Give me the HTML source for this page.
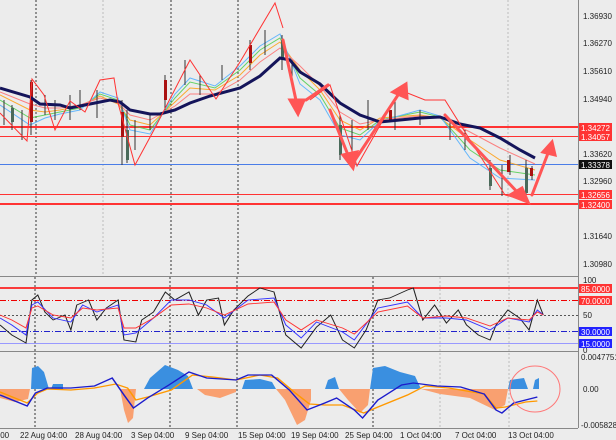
<!DOCTYPE html>
<html><head><meta charset="utf-8"><style>
html,body{margin:0;padding:0;background:#ececec;}
svg{display:block;font-family:"Liberation Sans",sans-serif;}
</style></head><body>
<svg width="616" height="440" viewBox="0 0 616 440" xmlns="http://www.w3.org/2000/svg">
<rect width="616" height="440" fill="#ececec"/>
<line x1="578.5" y1="0" x2="578.5" y2="428" stroke="#888" stroke-width="1"/>
<line x1="0" y1="276.5" x2="578" y2="276.5" stroke="#888"/>
<line x1="0" y1="351.5" x2="578" y2="351.5" stroke="#888"/>
<line x1="0" y1="428.5" x2="578" y2="428.5" stroke="#888"/>
<g stroke="#333" stroke-dasharray="2,2" stroke-width="1">
<line x1="36" y1="0" x2="36" y2="276"/><line x1="171" y1="0" x2="171" y2="276"/><line x1="238" y1="0" x2="238" y2="276"/>
<line x1="35" y1="277" x2="35" y2="428"/><line x1="170" y1="277" x2="170" y2="428"/><line x1="237" y1="277" x2="237" y2="428"/>
<line x1="373" y1="277" x2="373" y2="428"/>
</g>
<g stroke="#bbb" stroke-dasharray="2,2"><line x1="103" y1="0" x2="103" y2="276"/><line x1="508" y1="0" x2="508" y2="276"/><line x1="440" y1="277" x2="440" y2="428"/><line x1="509" y1="277" x2="509" y2="428"/></g>
<line x1="0" y1="127" x2="578" y2="127" stroke="#f33" stroke-width="2"/>
<line x1="0" y1="136.5" x2="578" y2="136.5" stroke="#f33"/>
<line x1="0" y1="164.5" x2="578" y2="164.5" stroke="#4a7de8"/>
<line x1="0" y1="194.5" x2="578" y2="194.5" stroke="#f33"/>
<line x1="0" y1="204" x2="578" y2="204" stroke="#f33" stroke-width="2"/>
<g fill="none" stroke-width="1" opacity="0.8">
<polyline stroke="#f90" points="0,95 30,110 45,112 60,110 80,106 100,96 118,104 130,120 150,125 175,102 190,88 215,90 240,75 260,55 280,42 300,70 320,90 340,120 360,130 380,118 420,115 440,118 470,140 500,160 535,170"/>
<polyline stroke="#4c4" points="0,100 30,118 45,115 60,112 80,108 100,94 118,100 130,125 150,130 175,98 190,82 215,88 240,70 260,50 280,38 300,78 320,95 340,128 360,135 380,120 420,112 440,117 470,150 500,170 535,175"/>
<polyline stroke="#4af" points="0,105 30,125 45,118 60,114 80,110 100,92 118,98 130,130 150,134 175,94 190,78 215,86 240,66 260,46 280,34 300,84 320,100 340,135 360,140 380,121 420,110 440,116 470,158 500,178 535,180"/>
<polyline stroke="#f66" points="0,92 30,104 45,108 60,108 80,105 100,98 118,103 130,115 150,120 175,106 190,94 215,94 240,80 260,62 280,48 300,66 320,86 340,112 360,124 380,120 420,116 440,117 470,132 500,148 535,164"/>
</g>
<g stroke="#333" stroke-width="1">
<line x1="4" y1="100" x2="4" y2="125"/><line x1="12" y1="105" x2="12" y2="130"/><line x1="22" y1="110" x2="22" y2="140"/><line x1="31" y1="80" x2="31" y2="135"/><line x1="45" y1="95" x2="45" y2="115"/><line x1="55" y1="100" x2="55" y2="120"/><line x1="70" y1="95" x2="70" y2="120"/><line x1="80" y1="90" x2="80" y2="110"/><line x1="97" y1="90" x2="97" y2="118"/><line x1="122" y1="100" x2="122" y2="165"/><line x1="127" y1="110" x2="127" y2="163"/><line x1="135" y1="120" x2="135" y2="150"/><line x1="150" y1="115" x2="150" y2="130"/><line x1="165" y1="75" x2="165" y2="110"/><line x1="185" y1="60" x2="185" y2="85"/><line x1="200" y1="75" x2="200" y2="95"/><line x1="222" y1="65" x2="222" y2="80"/><line x1="250" y1="40" x2="250" y2="70"/><line x1="265" y1="30" x2="265" y2="55"/><line x1="282" y1="35" x2="282" y2="70"/><line x1="292" y1="60" x2="292" y2="85"/><line x1="340" y1="115" x2="340" y2="160"/><line x1="352" y1="120" x2="352" y2="165"/><line x1="368" y1="100" x2="368" y2="130"/><line x1="395" y1="100" x2="395" y2="130"/><line x1="420" y1="110" x2="420" y2="125"/><line x1="450" y1="120" x2="450" y2="140"/><line x1="465" y1="130" x2="465" y2="150"/><line x1="490" y1="160" x2="490" y2="190"/><line x1="502" y1="165" x2="502" y2="196"/><line x1="510" y1="155" x2="510" y2="175"/><line x1="526" y1="160" x2="526" y2="197"/><line x1="532" y1="166" x2="532" y2="180"/>
</g>
<g fill="#a11"><rect x="30" y="82" width="3" height="40"/><rect x="121" y="112" width="3" height="25"/><rect x="164" y="80" width="3" height="20"/><rect x="249" y="45" width="3" height="18"/><rect x="389" y="110" width="3" height="10"/><rect x="507" y="160" width="3" height="12"/><rect x="530" y="168" width="3" height="8"/></g>
<g fill="#4a6a5a"><rect x="11" y="108" width="3" height="14"/><rect x="126" y="130" width="3" height="30"/><rect x="281" y="40" width="3" height="20"/><rect x="339" y="125" width="3" height="30"/><rect x="489" y="168" width="3" height="18"/><rect x="525" y="168" width="3" height="25"/></g>
<polyline fill="none" stroke="#14145a" stroke-width="3" points="0,88 30,97 40,104 60,105 70,108 90,104 110,100 120,102 130,110 150,114 160,114 175,110 190,103 210,96 240,88 260,76 280,58 290,60 300,72 320,84 340,103 360,115 380,122 400,120 420,118 440,117 460,124 480,128 500,138 520,150 535,158"/>
<polyline fill="none" stroke="#f33" stroke-width="1" points="0,113 27,141 32,79 44,95 55,130 70,101 85,112 100,80 114,78 118,103 135,165 155,128 190,60 216,99 240,62 275,3 283,28"/>
<polyline fill="none" stroke="#f33" stroke-width="1" points="310,100 330,85 357,166 400,90 425,100 445,100 470,140 505,195 525,200"/>
<g stroke="#f55" stroke-width="3" fill="#f55" stroke-linecap="round">
<line x1="283" y1="40" x2="297" y2="105"/><polygon points="290,100 304,100 298,114"/>
<line x1="306" y1="100" x2="328" y2="85"/>
<line x1="330" y1="110" x2="350" y2="160"/><polygon points="343,155 357,152 353,168"/>
<line x1="355" y1="160" x2="400" y2="92"/><polygon points="393,92 407,98 406,84"/>
<line x1="445" y1="115" x2="520" y2="195"/><polygon points="510,195 522,188 528,202"/>
<line x1="532" y1="195" x2="550" y2="148"/><polygon points="543,152 555,155 552,142"/>
</g>
<line x1="0" y1="288" x2="578" y2="288" stroke="#f00" stroke-width="1.5"/>
<line x1="0" y1="300.5" x2="578" y2="300.5" stroke="#e00" stroke-dasharray="6,2,1,2"/>
<line x1="0" y1="315.5" x2="578" y2="315.5" stroke="#555" stroke-dasharray="2,2"/>
<line x1="0" y1="331.5" x2="578" y2="331.5" stroke="#22c" stroke-dasharray="6,2,1,2"/>
<line x1="0" y1="343.5" x2="578" y2="343.5" stroke="#99f"/>
<path fill="#3a8fe0" d="M31,389 L32,368 L38,366 L44,372 L49,389Z M51,389 L53,384 L63,384 L63,389Z M144,389 L150,378 L165,365 L178,370 L188,376 L193,389Z M242,389 L245,380 L260,379 L272,382 L276,389Z M325,389 L328,380 L335,377 L339,389Z M370,389 L373,368 L385,366 L400,372 L415,376 L421,389Z M508,389 L510,380 L524,378 L528,389Z M533,389 L535,380 L539,378 L539,389Z"/>
<path fill="#f9a070" d="M0,389 L0,398 L15,402 L28,399 L30,389Z M120,389 L124,410 L128,423 L133,418 L136,389Z M197,389 L205,395 L220,398 L236,392 L236,389Z M276,389 L285,400 L297,425 L305,420 L311,400 L311,389Z M339,389 L348,400 L360,413 L368,405 L370,389Z M421,389 L440,394 L470,398 L495,410 L505,405 L508,389Z"/>
<g transform="scale(1.181,1)">
<polyline fill="none" stroke="#222" stroke-width="0.9" points="0,325 10,335 22,343 27,300 32,295 38,312 45,320 55,315 60,330 65,305 75,300 82,320 90,308 100,300 105,340 115,342 120,320 130,312 140,292 148,300 160,292 168,315 175,300 185,298 190,325 198,310 210,296 220,288 232,292 242,335 255,348 268,327 280,315 290,340 300,348 310,330 320,300 330,298 345,290 350,288 358,320 368,305 378,323 388,310 395,325 405,335 415,340 420,325 430,310 440,318 448,330 455,300 460,315"/>
<polyline fill="none" stroke="#33f" stroke-width="0.9" points="0,318 10,325 22,335 27,305 32,302 45,318 60,322 70,305 82,312 100,305 105,335 115,333 130,318 145,300 160,300 175,305 190,318 210,300 232,298 242,325 255,338 268,322 290,332 300,340 320,308 345,302 358,318 378,318 395,320 415,330 430,318 448,322 455,310 460,315"/>
<polyline fill="none" stroke="#f33" stroke-width="0.9" points="0,315 10,320 22,328 27,308 32,306 45,315 60,318 70,308 82,310 100,308 105,328 115,328 130,318 145,305 160,304 175,308 190,315 210,304 232,302 242,320 255,330 268,320 290,328 300,334 320,312 345,306 358,318 378,316 395,318 415,326 430,318 448,320 455,312 460,315"/>
<polyline fill="none" stroke="#f90" stroke-width="1.3" points="0,392 23,403 32,393 40,389 60,390 80,388 98,384 108,388 115,400 125,397 145,390 163,375 180,377 200,380 220,375 235,378 250,393 262,404 275,405 290,405 308,413 320,407 345,395 360,386 380,388 410,394 420,408 428,407 445,402 455,401"/>
<polyline fill="none" stroke="#1c1ccc" stroke-width="1.3" points="0,395 23,406 30,393 40,388 60,388 80,386 95,378 105,395 113,408 125,398 143,385 160,372 175,378 200,380 210,375 230,375 245,390 260,410 275,403 285,398 300,410 307,418 320,400 340,385 350,383 370,386 390,387 410,394 420,410 425,413 435,403 445,400 455,397"/>
</g>
<ellipse cx="535" cy="389" rx="25" ry="23" fill="none" stroke="#f77" stroke-width="1"/>
<g font-size="8" fill="#222">
<text x="583" y="19">1.36930</text><text x="583" y="46">1.36270</text><text x="583" y="74">1.35610</text><text x="583" y="102">1.34940</text><text x="583" y="157">1.33620</text><text x="583" y="184">1.32960</text><text x="583" y="239">1.31640</text><text x="583" y="267">1.30980</text>
<text x="583" y="283">100</text><text x="583" y="318">50</text><text x="583" y="353">0</text>
<text x="581" y="360">0.0047751</text><text x="583" y="392">0.00</text><text x="581" y="428">-0.0058288</text>
</g>
<g font-size="8" fill="#fff">
<rect x="579" y="123" width="33" height="9" fill="#f33"/><text x="581" y="131">1.34272</text>
<rect x="579" y="132" width="33" height="9" fill="#f33"/><text x="581" y="140">1.34057</text>
<rect x="579" y="160" width="33" height="9" fill="#111"/><text x="581" y="168">1.33378</text>
<rect x="579" y="190" width="33" height="9" fill="#f33"/><text x="581" y="198">1.32656</text>
<rect x="579" y="200" width="33" height="9" fill="#f33"/><text x="581" y="208">1.32400</text>
<rect x="579" y="284" width="33" height="9" fill="#f33"/><text x="581" y="292">85.0000</text>
<rect x="579" y="296" width="33" height="9" fill="#f33"/><text x="581" y="304">70.0000</text>
<rect x="579" y="327" width="33" height="9" fill="#22f"/><text x="581" y="335">30.0000</text>
<rect x="579" y="339" width="33" height="9" fill="#22f"/><text x="581" y="347">15.0000</text>
</g>
<g font-size="8" fill="#222">
<text x="-2" y="438">:00</text><text x="20" y="438">22 Aug 04:00</text><text x="75" y="438">28 Aug 04:00</text><text x="131" y="438">3 Sep 04:00</text><text x="185" y="438">9 Sep 04:00</text><text x="238" y="438">15 Sep 04:00</text><text x="291" y="438">19 Sep 04:00</text><text x="345" y="438">25 Sep 04:00</text><text x="400" y="438">1 Oct 04:00</text><text x="455" y="438">7 Oct 04:00</text><text x="508" y="438">13 Oct 04:00</text>
</g>
</svg>
</body></html>
